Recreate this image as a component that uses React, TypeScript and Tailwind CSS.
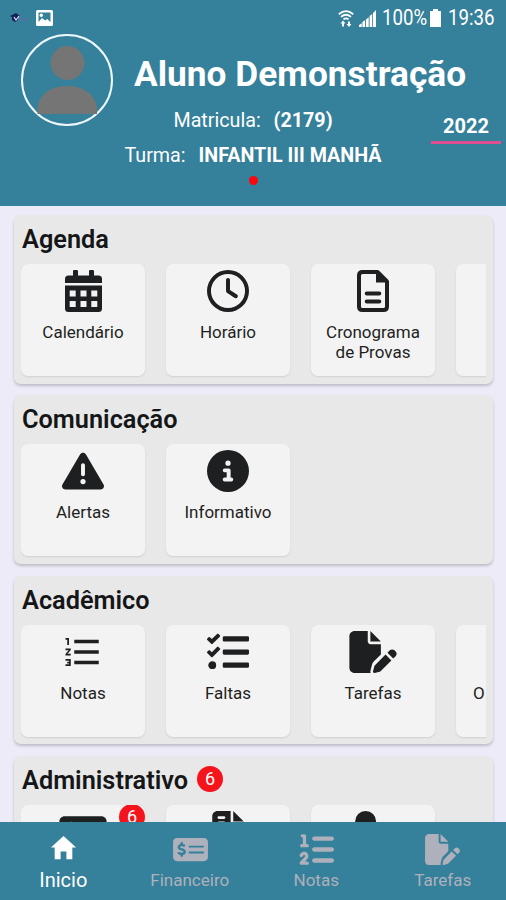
import type { ReactNode } from "react";
import {
  FaCircleInfo,
  FaFileInvoice,
  FaFilePen,
  FaListOl,
  FaMoneyCheckDollar,
  FaRegClock,
  FaTriangleExclamation,
  FaUserPen,
} from "react-icons/fa6";
import { FaTasks } from "react-icons/fa";
import { MdFormatListNumbered } from "react-icons/md";
import { IoMdHome } from "react-icons/io";

function CalendarIcon() {
  return (
    <svg className="h-[42px] w-[37px]" viewBox="0 0 37 42" fill="currentColor">
      <path fillRule="evenodd" d="M0 15.500h37v23q0 3.500-3.500 3.500h-30Q0 42 0 38.500zM4.700 20.500v6h6v-6zm10.800 0v6h6v-6zm10.800 0v6h6v-6zM4.700 31v6h6v-6zm10.800 0v6h6v-6zm10.800 0v6h6v-6z" />
      <path d="M0 13V9q0-3.500 3.500-3.500H8V1.300Q8 0 9.300 0h2.400Q13 0 13 1.300v4.200h11V1.300Q24 0 25.300 0h2.400Q29 0 29 1.300v4.200h4.500Q37 5.500 37 9v4z" />
    </svg>
  );
}

function DocumentIcon() {
  return (
    <svg className="h-[42px] w-8" viewBox="0 0 32 42" fill="none" stroke="currentColor" strokeWidth="4">
      <path d="M20.500 2h-15Q2 2 2 5.500v31Q2 40 5.500 40h21q3.500 0 3.500-3.500V11.500z" strokeLinejoin="round" />
      <path d="M19 1.500V12.500H31V11L21.500 1.500z" fill="currentColor" stroke="none" />
      <path d="M9.700 23.500h12.600M9.700 31.500h12.600" strokeLinecap="round" />
    </svg>
  );
}

function StatusBar() {
  return (
    <div className="flex h-[34px] items-center pl-[10px] pr-[11px] pt-[2px]">
      <svg className="h-3 w-[18px]" viewBox="0 0 18 12">
        <path d="M0 4 6 1l4 3-2 1v3L5 10 2 8V5z" fill="#17205c" />
        <path d="m4 5 2 3 3-4" fill="none" stroke="#dce8f5" strokeWidth="1.2" />
        <path d="M9.500 7.500H17" stroke="#5b6fa4" strokeWidth="2.500" strokeDasharray="2 .6" />
      </svg>
      <svg className="ml-2 h-4 w-[17px]" viewBox="0 0 17 16">
        <rect width="17" height="16" rx="1.5" fill="#fff" />
        <path d="M2.500 2.500h12V12l-3.300-3-2 1.500L6 8l-3.500 4z" fill="#35809a" />
        <circle cx="5.300" cy="5.300" r="1.700" fill="#fff" />
      </svg>
      <svg className="ml-auto h-[17px] w-4" viewBox="0 0 16 17" fill="none" stroke="#fff">
        <path d="M.8 4.200Q8-2 15.200 4.200M3 6.900Q8 2.600 13 6.900M5.500 9.400Q8 7.400 10.500 9.400" strokeWidth="1.800" />
        <path d="M5 16.500v-4M11 11.500v4" strokeWidth="2" />
        <path d="m2.500 13.500 2.500-3 2.500 3M8.500 14l2.500 3 2.500-3z" fill="#fff" stroke="none" />
      </svg>
      <svg className="ml-[5px] h-[17px] w-[17px]" viewBox="0 0 17 17" fill="#fff">
        <path d="M0 17v-2l2.700-1.800V17zM3.400 17v-5l2.700-1.900V17zM7 17V9.500l2.700-2.200V17zM10.600 17V6l2.600-2v13zM14 17V3l3-3v17z" />
      </svg>
      <span className="ml-[6px] w-[45px] origin-left scale-x-[.87] whitespace-nowrap text-[21.500px] leading-none">100%</span>
      <svg className="ml-[3px] h-[18px] w-[11px]" viewBox="0 0 11 18" fill="#fff">
        <path d="M3 0h5v2h3v16H0V2h3z" />
      </svg>
      <span className="ml-[7px] w-[47px] origin-left scale-x-[.87] whitespace-nowrap text-[21.500px] leading-none">19:36</span>
    </div>
  );
}

function Header() {
  return (
    <header className="relative h-[206px] shrink-0 bg-[#35809a] text-white">
      <StatusBar />
      <div className="flex">
        <svg className="ml-[21px] h-[92px] w-[92px] shrink-0" viewBox="0 0 92 92">
          <circle cx="46" cy="46" r="45" fill="none" stroke="#eef8fb" strokeWidth="2" />
          <circle cx="46.500" cy="29" r="17" fill="#757575" />
          <path d="M16.500 80V75C17 62 28 52 46 52s29.500 10 30 23v5z" fill="#757575" />
        </svg>
        <h1 className="ml-[21px] mt-[18px] whitespace-nowrap text-[35.300px] font-bold leading-[44px]">Aluno Demonstração</h1>
      </div>
      <div className="-mt-[17px] text-center text-[19.700px] leading-6">
        <p>Matricula: <b className="ml-2">(2179)</b></p>
        <p className="mt-[11px]">Turma: <b className="ml-2">INFANTIL III MANHÃ</b></p>
        <div className="mx-auto mt-2 size-[9px] rounded-full bg-[#fb0710]" />
      </div>
      <div className="absolute right-[5px] top-[114px] w-[70px] border-b-[3px] border-[#df4e91] pb-[2px] text-center text-[20px] font-bold leading-[25px]">2022</div>
    </header>
  );
}

function Tile({ icon, label, labelClass = "", badge }: { icon?: ReactNode; label?: string; labelClass?: string; badge?: string }) {
  return (
    <div className="relative flex h-[112px] w-[124px] shrink-0 flex-col items-center rounded-[7px] bg-[#f3f3f4] pt-[6px] text-[#1e1f21] shadow-[0_1px_2px_rgba(0,0,0,0.1)]">
      <div className="flex h-[42px] items-center justify-center">{icon}</div>
      <span className={`mt-[10px] whitespace-pre text-center text-[17px] leading-5 ${labelClass}`}>{label}</span>
      {badge && <Badge className="absolute -top-px right-0">{badge}</Badge>}
    </div>
  );
}

function Badge({ children, className = "" }: { children: string; className?: string }) {
  return <span className={`flex size-[26px] items-center justify-center rounded-full bg-[#f5141c] text-[18px] font-normal leading-none text-white ${className}`}>{children}</span>;
}

function Section({ title, badge, children }: { title: string; badge?: string; children: ReactNode }) {
  return (
    <section className="h-[168.500px] shrink-0 rounded-[7px] bg-[#e8e8e8] pl-[7px] pr-[7px] shadow-[0_2px_3px_rgba(0,0,0,0.2)]">
      <h2 className="flex h-[49px] items-center gap-[9px] pl-px pt-px text-[25.300px] font-semibold text-[#151618]"><span>{title}</span>{badge && <Badge className="-mt-[5px]">{badge}</Badge>}</h2>
      <div className="flex gap-[21px] overflow-hidden pb-1">{children}</div>
    </section>
  );
}

function NavItem({ icon, label, active = false }: { icon: ReactNode; label: string; active?: boolean }) {
  return (
    <a className={`flex flex-1 flex-col items-center pt-[9px] ${active ? "text-white" : "text-[#aeb1bb]"}`}>
      <span className="flex h-[36px] items-center">{icon}</span>
      <span className={`mt-px leading-6 ${active ? "text-[20px]" : "text-[17px]"}`}>{label}</span>
    </a>
  );
}

export default function App() {
  return (
    <div className="flex h-[900px] w-[506px] flex-col overflow-hidden bg-[#edebf7] font-[Roboto,sans-serif]">
      <Header />
      <main className="flex min-h-0 flex-1 flex-col gap-[11.900px] overflow-hidden pl-[14px] pr-[13px] pt-[9px]">
        <Section title="Agenda">
          <Tile icon={<CalendarIcon />} label="Calendário" />
          <Tile icon={<FaRegClock size={42} />} label="Horário" />
          <Tile icon={<DocumentIcon />} label={"Cronograma\nde Provas"} />
          <Tile />
        </Section>
        <Section title="Comunicação">
          <Tile icon={<FaTriangleExclamation size={42} />} label="Alertas" />
          <Tile icon={<FaCircleInfo size={42} />} label="Informativo" />
        </Section>
        <Section title="Acadêmico">
          <Tile icon={<MdFormatListNumbered size={42} />} label="Notas" />
          <Tile icon={<FaTasks size={42} />} label="Faltas" />
          <Tile icon={<FaFilePen size={42} className="w-[48px]" />} label="Tarefas" />
          <Tile label="O" labelClass="self-start ml-[17px]" />
        </Section>
        <Section title="Administrativo" badge="6">
          <Tile icon={<FaMoneyCheckDollar size={42} className="w-[48px]" />} badge="6" />
          <Tile icon={<FaFileInvoice size={42} />} />
          <Tile icon={<FaUserPen className="h-[42px] w-[53px]" />} />
        </Section>
      </main>
      <nav className="flex h-[78px] shrink-0 bg-[#35809a]">
        <NavItem icon={<IoMdHome size={31} className="-mt-1" />} label="Inicio" active />
        <NavItem icon={<FaMoneyCheckDollar size={31} className="ml-px w-[35px]" />} label="Financeiro" />
        <NavItem icon={<FaListOl size={35} className="ml-px" />} label="Notas" />
        <NavItem icon={<FaFilePen size={31} className="w-[35px]" />} label="Tarefas" />
      </nav>
    </div>
  );
}
